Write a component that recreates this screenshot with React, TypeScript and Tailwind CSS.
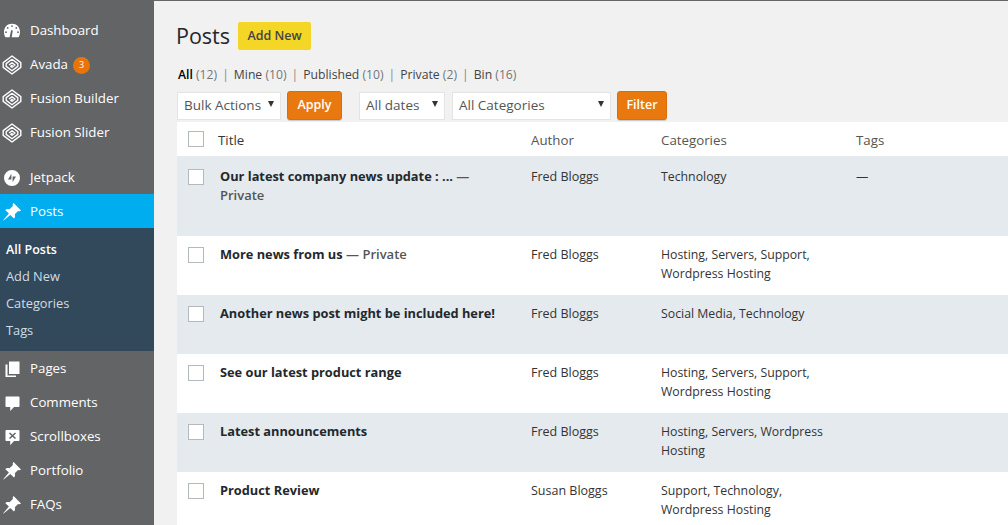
import type { ReactNode } from "react";

type Post = {
  title: string;
  isPrivate?: boolean;
  privateBreak?: boolean;
  author: string;
  categories: ReactNode;
  tags?: string;
  height: string;
  shaded?: boolean;
};

const PinIcon = () => (
  <svg viewBox="0 0 20 20" className="h-5 w-5" fill="currentColor">
    <path d="M11.600 1 19 8.400c-.7.800-1.800 1-2.900.6l-3.300 3.300c.6 1.500.3 3.200-.8 4.300L8.300 13 1.600 18.600 1.200 18.200 6.900 11.600 3.200 8c1.100-1.100 2.800-1.400 4.300-.8l3.400-3.300c-.4-1-.1-2.200.7-2.900z" />
  </svg>
);

const FusionIcon = () => (
  <svg viewBox="0 0 20 20" className="h-5 w-5" fill="none" stroke="currentColor" strokeWidth="1.400" strokeLinejoin="round">
    <path d="M10 1 18.800 7.600v4.800L10 19 1.200 12.400V7.600z" />
    <path d="M10 4.200 15.800 8.600v2.800L10 15.800 4.200 11.400V8.600L10 4.200" />
    <path d="M7 10 10 7.700 13 10 10 12.300 8.800 11.400 10.500 10" />
  </svg>
);

const GaugeIcon = () => (
  <svg viewBox="0 0 20 20" className="h-5 w-5" fill="currentColor">
    <path
      fillRule="evenodd"
      d="M10 2.800C5.300 2.800 2 6.300 2 11c0 1.900.5 3.500 1.400 5.200h4.200l1.500-7 1.700.4-1.100 6.600h6.900c.9-1.700 1.400-3.300 1.400-5.200 0-4.700-3.300-8.200-8-8.200zM10 4.200a.9.9 0 1 1 0 1.800.9.9 0 0 1 0-1.800zM5.700 6a.9.9 0 1 1 0 1.800.9.9 0 0 1 0-1.800zm8.600 0a.9.9 0 1 1 0 1.800.9.9 0 0 1 0-1.800zM4 10.300a.9.9 0 1 1 0 1.800.9.9 0 0 1 0-1.800zm12 0a.9.9 0 1 1 0 1.800.9.9 0 0 1 0-1.800z"
    />
  </svg>
);

const JetpackIcon = () => (
  <svg viewBox="0 0 20 20" className="h-5 w-5" fill="currentColor">
    <path
      fillRule="evenodd"
      d="M10 2a8 8 0 1 0 0 16 8 8 0 0 0 0-16zM9.400 5.800 9.400 11.500 6 11.500zM10.600 8.500 14 8.500 10.600 14.200z"
    />
  </svg>
);

const PagesIcon = () => (
  <svg viewBox="0 0 20 20" className="h-5 w-5" fill="currentColor">
    <path d="M7 2.500H17.500V15H7z" />
    <path d="M3.500 5.500H5.500V16.500H14V18H3.500z" />
  </svg>
);

const CommentIcon = () => (
  <svg viewBox="0 0 20 20" className="h-5 w-5" fill="currentColor">
    <path d="M4.500 3.500h12c.6 0 1 .4 1 1v8.500c0 .6-.4 1-1 1h-4.500l-3.800 4v-4H4.500c-.6 0-1-.4-1-1V4.500c0-.6.4-1 1-1z" />
  </svg>
);

const ScrollboxIcon = () => (
  <svg viewBox="0 0 20 20" className="h-5 w-5" fill="currentColor">
    <path
      fillRule="evenodd"
      d="M4.500 3h12c.6 0 1 .4 1 1v9c0 .6-.4 1-1 1h-4.500l-3.800 4.200V14H4.500c-.6 0-1-.4-1-1V4c0-.6.4-1 1-1zM8 5.500 7 6.500 9.500 8.700 7 11 8 12 10.500 9.700 13 12 14 11 11.500 8.700 14 6.500 13 5.500 10.500 7.700z"
    />
  </svg>
);

function MenuItem({ icon, label, badge, active }: { icon: ReactNode; label: string; badge?: string; active?: boolean }) {
  return (
    <div className={`flex h-[34px] items-center pt-[2px] text-[13.300px] text-white ${active ? "bg-[#00aeef]" : ""}`}>
      <span className="flex w-6 justify-center">{icon}</span>
      <span className="ml-[6px] whitespace-nowrap">{label}</span>
      {badge && (
        <span className="ml-[5px] flex h-[17px] w-[17px] items-center justify-center rounded-full bg-[#e9750a] text-[9px]">
          {badge}
        </span>
      )}
    </div>
  );
}

const Sidebar = () => (
  <div className="w-[154px] shrink-0 bg-[#636466] pt-[13px]">
    <MenuItem icon={<GaugeIcon />} label="Dashboard" />
    <MenuItem icon={<FusionIcon />} label="Avada" badge="3" />
    <MenuItem icon={<FusionIcon />} label="Fusion Builder" />
    <MenuItem icon={<FusionIcon />} label="Fusion Slider" />
    <div className="h-[11px]" />
    <MenuItem icon={<JetpackIcon />} label="Jetpack" />
    <MenuItem icon={<PinIcon />} label="Posts" active />
    <div className="flex h-[123px] flex-col bg-[#32495c] pl-[6px] pt-[8px] text-[12.800px] text-[#d3dce3]">
      <div className="flex h-[27px] items-center pt-[1px] text-[12.500px] font-semibold text-white">All Posts</div>
      <div className="flex h-[27px] items-center">Add New</div>
      <div className="flex h-[27px] items-center">Categories</div>
      <div className="flex h-[27px] items-center">Tags</div>
    </div>
    <MenuItem icon={<PagesIcon />} label="Pages" />
    <MenuItem icon={<CommentIcon />} label="Comments" />
    <MenuItem icon={<ScrollboxIcon />} label="Scrollboxes" />
    <MenuItem icon={<PinIcon />} label="Portfolio" />
    <MenuItem icon={<PinIcon />} label="FAQs" />
  </div>
);

const Select = ({ label, width }: { label: string; width: string }) => (
  <div className={`flex h-7 items-center justify-between border border-[#e4e4e4] bg-white pl-[6px] pr-[6px] text-[13.500px] text-[#555] ${width}`}>
    <span className="-mt-[1px] whitespace-nowrap">{label}</span>
    <span className="mb-[3px] h-0 w-0 border-x-[3.500px] border-t-[6px] border-x-transparent border-t-[#333]" />
  </div>
);

const OrangeButton = ({ label, width }: { label: string; width: string }) => (
  <div className={`flex h-[29px] items-center justify-center rounded-[3px] border border-[#d96f0c] bg-[#e9790f] text-[12.500px] font-semibold text-white shadow-[0_1px_0_#ccc] ${width}`}>
    {label}
  </div>
);

const Checkbox = () => <div className="h-4 w-4 border border-[#b4b9be] bg-white" />;

const Separator = () => <span className="px-[5px] text-[#888]">|</span>;

const posts: Post[] = [
  { title: "Our latest company news update : ...", isPrivate: true, privateBreak: true, author: "Fred Bloggs", categories: "Technology", tags: "—", height: "h-[79px] pt-[10px]", shaded: true },
  { title: "More news from us", isPrivate: true, author: "Fred Bloggs", categories: <>Hosting, Servers, Support,<br />Wordpress Hosting</>, height: "h-[59px] pt-[9px]" },
  { title: "Another news post might be included here!", author: "Fred Bloggs", categories: "Social Media, Technology", height: "h-[59px] pt-[9px]", shaded: true },
  { title: "See our latest product range", author: "Fred Bloggs", categories: <>Hosting, Servers, Support,<br />Wordpress Hosting</>, height: "h-[59px] pt-[9px]" },
  { title: "Latest announcements", author: "Fred Bloggs", categories: <>Hosting, Servers, Wordpress<br />Hosting</>, height: "h-[59px] pt-[9px]", shaded: true },
  { title: "Product Review", author: "Susan Bloggs", categories: <>Support, Technology,<br />Wordpress Hosting</>, height: "h-[59px] pt-[9px]" },
];

const rowGrid = "grid grid-cols-[43px_311px_130px_195px_1fr]";

const PostRow = ({ post }: { post: Post }) => (
  <div className={`${rowGrid} ${post.height} text-[12.300px] leading-[19px] text-[#333] ${post.shaded ? "bg-[#e4eaee]" : "bg-white"}`}>
    <div className="pl-[11px] pt-[2px]"><Checkbox /></div>
    <div className="text-[12.800px]">
      <span className="font-bold text-[#23282d]">{post.title}</span>
      {post.isPrivate && (
        <span className="text-[13px] font-semibold text-[#555]">
          {" — "}
          {post.privateBreak && <br />}
          Private
        </span>
      )}
    </div>
    <div className="text-[12.500px]">{post.author}</div>
    <div>{post.categories}</div>
    <div>{post.tags}</div>
  </div>
);

export default function App() {
  return (
    <div className="flex h-[525px] w-[1008px] overflow-hidden font-['Open_Sans',sans-serif]">
      <Sidebar />
      <div className="min-w-0 flex-1 border-t border-t-[#666] bg-[#f1f1f1] pl-[23px]">
        <div className="flex items-center pt-[21px]">
          <h1 className="-ml-[1px] text-[21.500px] leading-[28px] text-[#23282d]">Posts</h1>
          <div className="ml-[8px] flex h-7 w-[73px] items-center justify-center rounded-[2px] bg-[#f3d626] pt-[1px] text-[12.500px] font-semibold text-[#444]">
            Add New
          </div>
        </div>
        <div className="mt-[16px] flex h-[19px] items-center whitespace-pre pl-[1px] text-[12.200px] text-[#444]">
          <span className="font-semibold text-black">All</span>
          <span className="text-[#72777c]"> (12)</span>
          <Separator />
          <span>Mine</span>
          <span className="text-[#72777c]"> (10)</span>
          <Separator />
          <span>Published</span>
          <span className="text-[#72777c]"> (10)</span>
          <Separator />
          <span>Private</span>
          <span className="text-[#72777c]"> (2)</span>
          <Separator />
          <span>Bin</span>
          <span className="text-[#72777c]"> (16)</span>
        </div>
        <div className="mt-[6px] flex items-center">
          <Select label="Bulk Actions" width="w-[104px]" />
          <OrangeButton label="Apply" width="ml-[6px] w-[55px]" />
          <Select label="All dates" width="ml-[17px] w-[86px]" />
          <Select label="All Categories" width="ml-[7px] w-[159px]" />
          <OrangeButton label="Filter" width="ml-[6px] w-[50px]" />
        </div>
        <div className="mt-[2px]">
          <div className={`${rowGrid} h-[35px] items-center border-b border-[#e5e9ec] bg-white text-[13.300px] text-[#555]`}>
            <div className="pl-[11px]"><Checkbox /></div>
            <div className="pt-[4px] text-[#32373c]"><span className="-ml-[2px]">Title</span></div>
            <div className="pt-[4px]">Author</div>
            <div className="pt-[4px]">Categories</div>
            <div className="pt-[4px]">Tags</div>
          </div>
          {posts.map((post) => (
            <PostRow key={post.title} post={post} />
          ))}
        </div>
      </div>
    </div>
  );
}
